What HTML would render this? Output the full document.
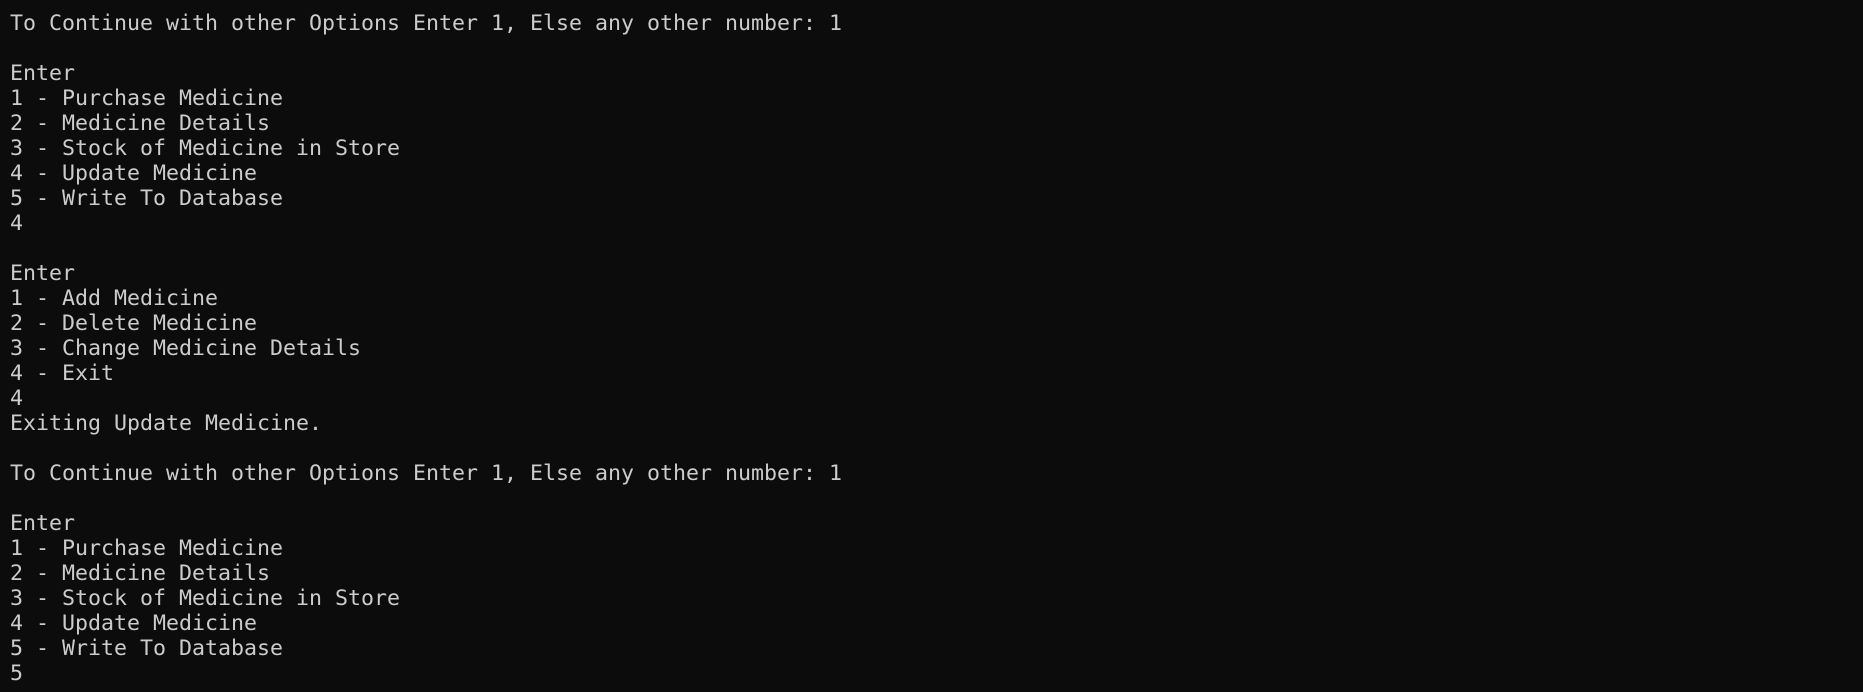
<!DOCTYPE html>
<html><head><meta charset="utf-8"><style>
html,body{margin:0;padding:0;background:#0c0c0c;width:1863px;height:692px;overflow:hidden}
pre{margin:0;padding:11px 0 0 10px;font-family:"DejaVu Sans Mono","Liberation Mono",monospace;font-size:21.6px;line-height:25px;color:#cccccc}
</style></head><body><pre>To Continue with other Options Enter 1, Else any other number: 1

Enter
1 - Purchase Medicine
2 - Medicine Details
3 - Stock of Medicine in Store
4 - Update Medicine
5 - Write To Database
4

Enter
1 - Add Medicine
2 - Delete Medicine
3 - Change Medicine Details
4 - Exit
4
Exiting Update Medicine.

To Continue with other Options Enter 1, Else any other number: 1

Enter
1 - Purchase Medicine
2 - Medicine Details
3 - Stock of Medicine in Store
4 - Update Medicine
5 - Write To Database
5</pre></body></html>
